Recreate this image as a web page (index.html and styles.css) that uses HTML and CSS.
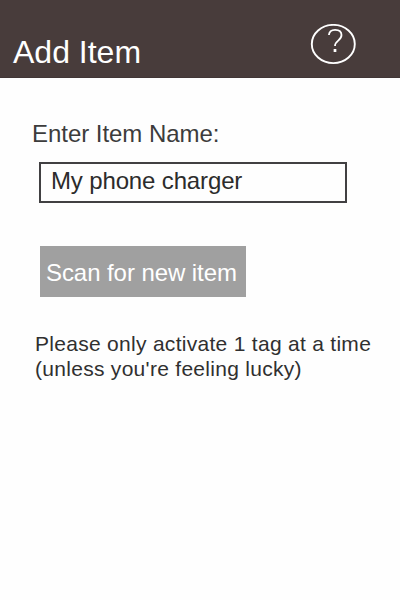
FILE: index.html
```html
<!DOCTYPE html>
<html lang="en">
<head>
<meta charset="utf-8">
<title>Add Item</title>
<link rel="stylesheet" href="styles.css">
</head>
<body>
<header class="header">
  <h1 class="title">Add Item</h1>
  <svg class="help" width="46" height="42" viewBox="0 0 46 42" fill="none" stroke="#fff" role="img" aria-label="Help">
    <ellipse cx="23.3" cy="20" rx="21.5" ry="19.1" stroke-width="1.9"/>
    <path d="M18.9 11C19.2 7.6 21.4 5.8 25.1 5.8C29 5.8 31.5 7.9 31.5 11C31.5 13.6 30.2 15 28.2 16.6C25.9 18.4 25 19.5 25 22" stroke-width="1.8"/>
    <path d="M25 25V28" stroke-width="2.7"/>
  </svg>
</header>
<main class="content">
  <label class="label" for="name">Enter Item Name:</label>
  <input class="field" id="name" type="text" value="My phone charger">
  <button class="scan" type="button">Scan for new item</button>
  <p class="note">Please only activate 1 tag at a time<br>(unless you're feeling lucky)</p>
</main>
</body>
</html>
```
FILE: styles.css
```css
* {
  box-sizing: border-box;
}

body {
  margin: 0;
  min-height: 600px;
  background: #fefefe;
  color: #303030;
  font-family: "Liberation Sans", Arial, sans-serif;
}

.header {
  display: flex;
  justify-content: space-between;
  align-items: flex-start;
  height: 78px;
  padding: 24px 44px 0 13px;
  background: #483c3b;
  border-bottom: 1px solid #413636;
}

.title {
  margin: 10px 0 0;
  color: #fff;
  font-size: 32px;
  font-weight: 400;
  line-height: 36px;
}

.content {
  display: flex;
  flex-direction: column;
  align-items: flex-start;
  padding: 42px 0 0 31px;
}

.label {
  margin-left: 1px;
  color: #3c3c3c;
  font-size: 24px;
  line-height: 28px;
  letter-spacing: -0.04px;
}

.field {
  width: 308px;
  height: 41px;
  margin: 14px 0 0 8px;
  padding: 0 10px 4px;
  border: 2px solid #414042;
  border-radius: 0;
  outline: 0;
  background: #fefefe;
  color: #2c2c2c;
  font: 24px/28px "Liberation Sans", Arial, sans-serif;
  letter-spacing: -0.14px;
}

.scan {
  width: 206px;
  height: 51px;
  margin: 43px 0 0 9px;
  padding: 2px 0 0 6px;
  border: 0;
  background: #a0a0a0;
  color: #fff;
  font: 24px/28px "Liberation Sans", Arial, sans-serif;
  letter-spacing: -0.07px;
  text-align: left;
  white-space: nowrap;
}

.note {
  margin: 34px 0 0 4px;
  font-size: 21px;
  line-height: 25px;
  letter-spacing: 0.29px;
  white-space: nowrap;
}
```
